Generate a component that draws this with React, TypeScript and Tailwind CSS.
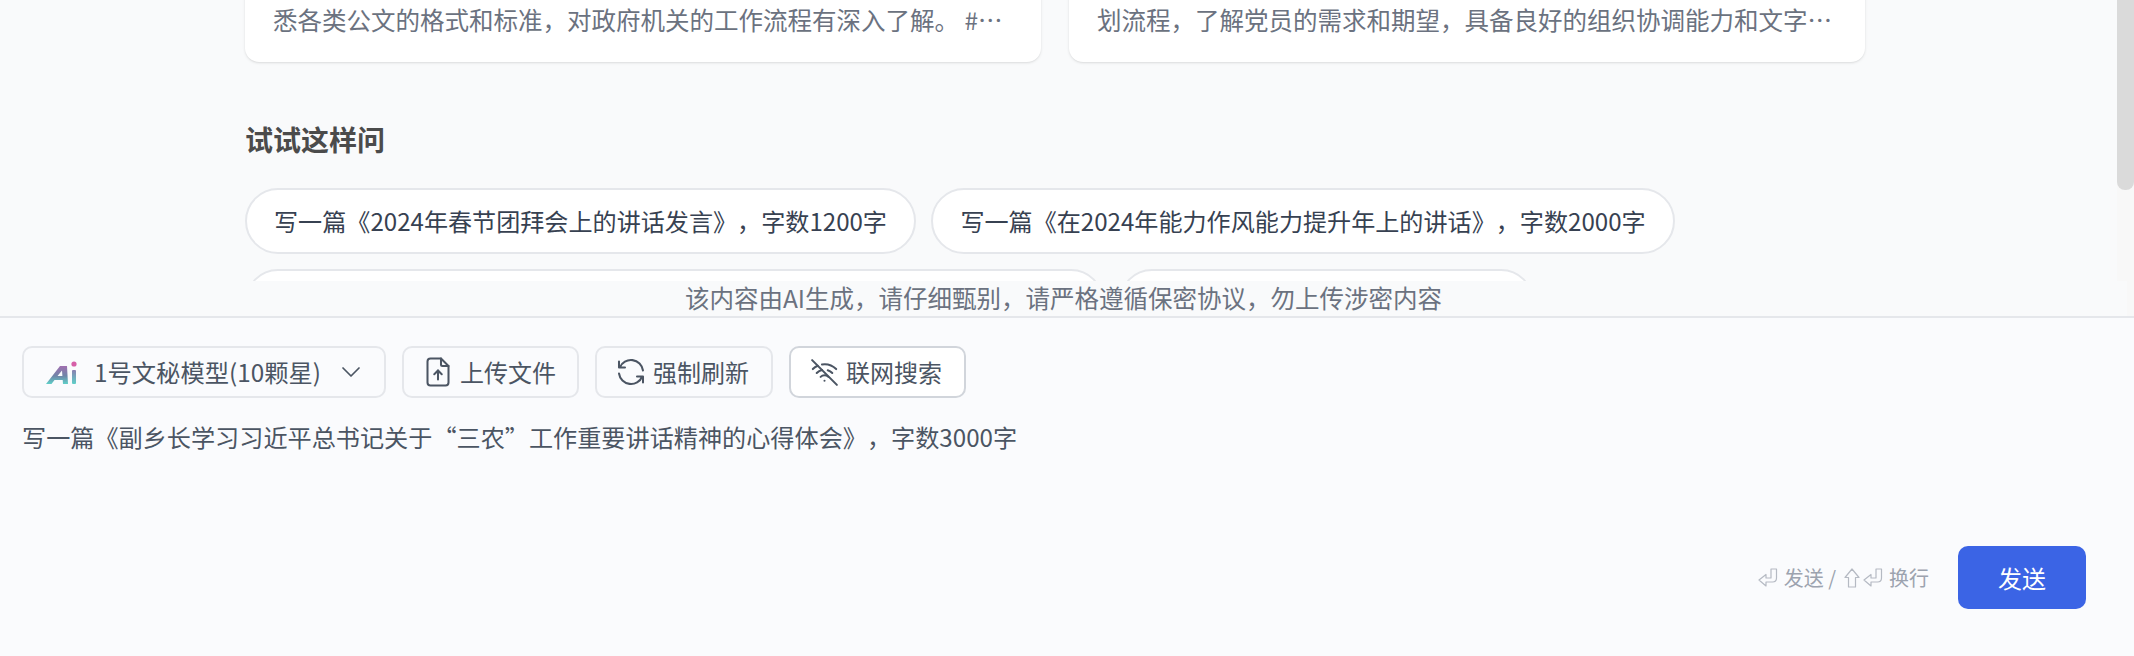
import { TbChevronDown, TbFileUpload, TbRefresh, TbWifiOff } from "react-icons/tb";

const font = "font-['Noto_Sans_CJK_SC','Noto_Sans',sans-serif]";

function AiLogo() {
  return (
    <svg width="32" height="28" viewBox="0 0 32 28" className="blur-[0.6px] shrink-0">
      <defs>
        <linearGradient id="ai" x1="0" y1="0" x2="0" y2="1">
          <stop offset="0" stopColor="#a06fb0" />
          <stop offset="0.55" stopColor="#6f85a8" />
          <stop offset="1" stopColor="#5fd0c8" />
        </linearGradient>
        <linearGradient id="ai2" x1="0" y1="0" x2="0" y2="1">
          <stop offset="0" stopColor="#8a7fb0" />
          <stop offset="1" stopColor="#5fd0c8" />
        </linearGradient>
      </defs>
      <path d="M0 26 L14 8 H21 L22 26 H17 L16.7 22 H8.5 L5.5 26 Z M11.5 18 H16.4 L16 12.5 Z" fill="url(#ai)" />
      <rect x="26" y="12" width="4" height="14" rx="1" fill="url(#ai2)" />
      <circle cx="28" cy="6" r="2.6" fill="#d65fa8" />
    </svg>
  );
}

function EnterIcon() {
  return (
    <svg width="20" height="20" viewBox="0 0 20 20" fill="none" stroke="#b5bac3" strokeWidth="1.2">
      <path d="M13 1 H18.5 V10 Q18.5 14 14.5 14 H8 V18 L1 12 L8 6.5 V10 H13 Z" strokeLinejoin="round" />
    </svg>
  );
}

function ShiftIcon() {
  return (
    <svg width="16" height="20" viewBox="0 0 16 20" fill="none" stroke="#b5bac3" strokeWidth="1.2">
      <path d="M8 1 L15 9.5 H11.5 V19 H4.5 V9.5 H1 Z" strokeLinejoin="round" />
    </svg>
  );
}

function Chip({ text, width }: { text: string; width: string }) {
  return (
    <div className={`${width} h-[66px] flex items-center justify-center bg-white border-2 border-[#e5e7eb] rounded-[33px] text-[24.1px] text-[#374151] whitespace-nowrap`}>
      {text}
    </div>
  );
}

function ToolButton({ icon, label, pad, gap, active }: { icon: React.ReactNode; label: string; pad: string; gap: string; active?: boolean }) {
  return (
    <button
      className={`w-full h-[52px] flex items-center justify-center ${pad} ${gap} rounded-[10px] border-2 text-[24px] text-[#4b5563] ${
        active ? "bg-white border-[#d1d5db]" : "border-[#e5e7eb]"
      }`}
    >
      {icon}
      <span>{label}</span>
    </button>
  );
}

export default function App() {
  return (
    <div className={`h-[656px] w-full overflow-hidden flex flex-col bg-[#f9fafb] [text-spacing-trim:space-all] ${font}`}>
      {/* Scrollable area */}
      <div className="relative h-[316px] shrink-0 overflow-hidden flex">
        <div className="flex-1 pl-[245px] overflow-hidden">
          <div className="flex gap-[28px] -mt-[20px]">
            <div className="w-[796px] h-[82px] bg-white rounded-[14px] shadow-sm px-[28px] pt-[16px] text-[24.5px] leading-[48px] text-[#6b7280] whitespace-nowrap overflow-hidden">
              悉各类公文的格式和标准，对政府机关的工作流程有深入了解。 #…
            </div>
            <div className="w-[796px] h-[82px] bg-white rounded-[14px] shadow-sm px-[28px] pt-[16px] text-[24.5px] leading-[48px] text-[#6b7280] whitespace-nowrap overflow-hidden">
              划流程，了解党员的需求和期望，具备良好的组织协调能力和文字…
            </div>
          </div>

          <h2 className="mt-[59px] text-[28px] leading-[36px] font-bold text-[#4b4b4b]">试试这样问</h2>

          <div className="mt-[31px] flex gap-[15px]">
            <Chip width="w-[671px]" text="写一篇《2024年春节团拜会上的讲话发言》，字数1200字" />
            <Chip width="w-[744px]" text="写一篇《在2024年能力作风能力提升年上的讲话》，字数2000字" />
          </div>
          <div className="mt-[15px] flex gap-[15px]">
            <div className="w-[859px] h-[66px] bg-white border-2 border-[#e5e7eb] rounded-[33px]" />
            <div className="w-[415px] h-[66px] bg-white border-2 border-[#e5e7eb] rounded-[33px]" />
          </div>
        </div>

        {/* Scrollbar */}
        <div className="w-[17px] shrink-0 bg-[#f8f8f8]">
          <div className="h-[190px] bg-[#dadada] rounded-b-[8px]" />
        </div>

        {/* Disclaimer over the list */}
        <div className="absolute left-0 right-[7px] bottom-0 h-[35px] pb-[2px] bg-[#f9fafb] text-center text-[24.5px] leading-[33px] text-[#6b7280]">
          该内容由AI生成，请仔细甄别，请严格遵循保密协议，勿上传涉密内容
        </div>
      </div>

      {/* Input panel */}
      <div className="flex-1 border-t-2 border-[#e5e7eb] bg-[#fafbfd] pl-[22px] pr-[48px] pt-[28px] flex flex-col">
        <div className="flex gap-[16px]">
          <button className="w-[364px] h-[52px] flex items-center rounded-[10px] border-2 border-[#e5e7eb] pl-[22px] text-[24.3px] text-[#4b5563]">
            <AiLogo />
            <span className="ml-[16px]">1号文秘模型(10颗星)</span>
            <TbChevronDown size={32} strokeWidth={1.3} className="ml-[14px]" />
          </button>
          <div className="w-[177px]">
            <ToolButton pad="pr-[5px]" gap="gap-[4px]" icon={<TbFileUpload size={36} strokeWidth={1.35} />} label="上传文件" />
          </div>
          <div className="w-[178px]">
            <ToolButton pad="pr-[6px]" gap="gap-[4px]" icon={<TbRefresh size={36} strokeWidth={1.35} />} label="强制刷新" />
          </div>
          <div className="w-[177px]">
            <ToolButton active pad="pr-[5px]" gap="gap-[5px]" icon={<TbWifiOff size={33} strokeWidth={1.5} />} label="联网搜索" />
          </div>
        </div>

        <div className="mt-[21px] text-[24.15px] leading-[36px] text-[#4b5563] whitespace-nowrap">
          写一篇《副乡长学习习近平总书记关于“三农”工作重要讲话精神的心得体会》，字数3000字
        </div>

        <div className="mt-[91px] flex items-center justify-end">
          <div className="flex items-center text-[20px] text-[#9ca3af]">
            <EnterIcon />
            <span className="ml-[6px]">发送 /</span>
            <span className="ml-[8px]"><ShiftIcon /></span>
            <span className="ml-[3px]"><EnterIcon /></span>
            <span className="ml-[6px]">换行</span>
          </div>
          <button className="ml-[29px] w-[128px] h-[63px] rounded-[10px] bg-[#3b64e5] text-white text-[24px]">发送</button>
        </div>
      </div>
    </div>
  );
}
